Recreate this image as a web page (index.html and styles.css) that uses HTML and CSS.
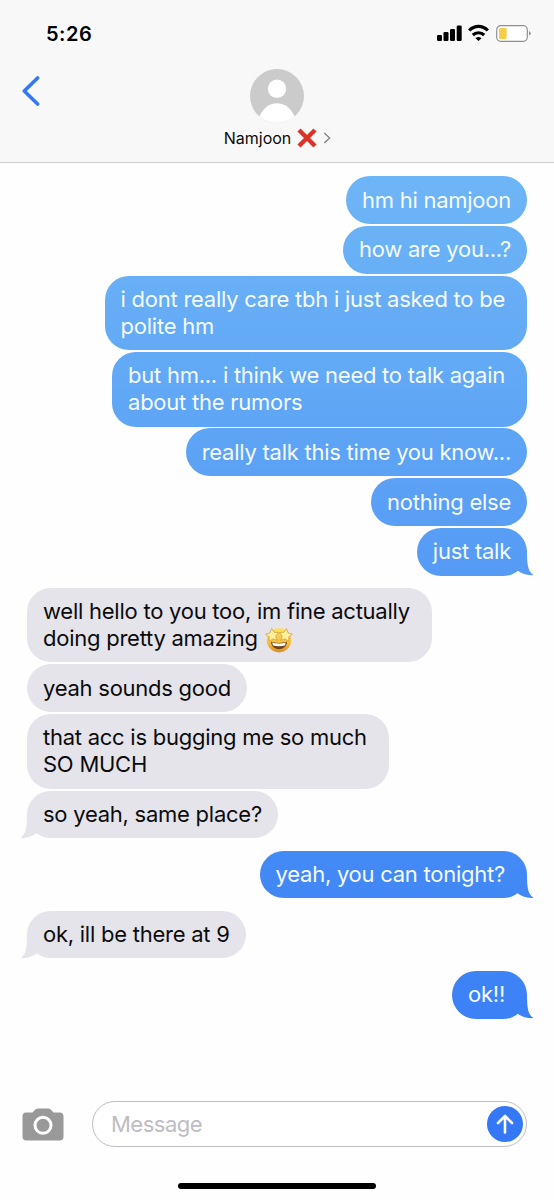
FILE: index.html
```html
<!DOCTYPE html>
<html lang="en">
<head>
    <meta charset="UTF-8">
    <meta name="viewport" content="width=device-width, initial-scale=1.0">
    <title>Messages</title>
    <link rel="stylesheet" href="styles.css">
</head>
<body>
    <header class="header">
        <div class="status-bar">
            <span class="time">5:26</span>
            <svg class="status-icons" width="96" height="20" viewBox="0 0 96 20">
                <rect x="1" y="12" width="5" height="6" rx="1.2"/>
                <rect x="7.5" y="9" width="5" height="9" rx="1.2"/>
                <rect x="14" y="6" width="5" height="12" rx="1.2"/>
                <rect x="20.7" y="2.5" width="5" height="15.5" rx="1.2"/>
                <g fill="none" stroke="#000" stroke-width="3.2">
                    <path d="M33.2 7.5C38.5 2 46.5 2 51.8 7.5"/>
                    <path d="M36.8 12C40 9 45 9 48.2 12"/>
                </g>
                <path d="M42.5 18L39.5 15.2Q42.5 13 45.5 15.2Z"/>
                <rect x="60.7" y="2.7" width="30.6" height="15.6" rx="4" fill="#fff" stroke="#8e8e92" stroke-width="1.2"/>
                <rect x="63" y="5" width="7.6" height="11" rx="1.5" fill="#f7cd46"/>
                <path d="M93 8Q96.4 10.3 93 12.8Z" fill="#8e8e92"/>
            </svg>
        </div>
        <div class="contact-bar">
            <svg class="back" width="18" height="30" viewBox="0 0 18 30">
                <path d="M15.6 2L2.3 15L15.6 28" fill="none" stroke="#3478f6" stroke-width="3.6" stroke-linecap="round" stroke-linejoin="round"/>
            </svg>
            <div class="contact">
                <svg width="54" height="54" viewBox="0 0 54 54">
                    <circle cx="27" cy="27" r="27" fill="#cbcbcb"/>
                    <circle cx="27" cy="19.8" r="9.2" fill="#fff"/>
                    <path d="M9.5 47.5C13 39.5 19 34.3 27 34.3S41 39.5 44.5 47.5A27 27 0 0 1 9.5 47.5Z" fill="#fff"/>
                </svg>
                <div class="name">
                    <span class="name-text">Namjoon</span>
                    <svg class="cross" width="20" height="20" viewBox="0 0 20 20">
                        <path d="M2 2L18 18M18 2L2 18" stroke="#dc3228" stroke-width="4.4"/>
                    </svg>
                    <svg width="8" height="12" viewBox="0 0 8 12">
                        <path d="M1.3 1L6.6 6L1.3 11" fill="none" stroke="#858589" stroke-width="1.4"/>
                    </svg>
                </div>
            </div>
        </div>
    </header>

    <main class="chat">
        <div class="group">
            <p class="bubble sent">hm hi namjoon</p>
            <p class="bubble sent">how are you...?</p>
            <p class="bubble sent wide">i dont really care tbh i just asked to be<br>polite hm</p>
            <p class="bubble sent wide">but hm... i think we need to talk again<br>about the rumors</p>
            <p class="bubble sent">really talk this time you know...</p>
            <p class="bubble sent">nothing else</p>
            <p class="bubble sent tail">just talk</p>
        </div>
        <div class="group">
            <p class="bubble received wide">well hello to you too, im fine actually<br>doing pretty amazing <svg class="emoji" width="28" height="26" viewBox="0 0 28 26">
                <defs>
                    <linearGradient id="face" x1="0" y1="0" x2="0" y2="1">
                        <stop offset="0" stop-color="#fbe26a"/>
                        <stop offset="0.65" stop-color="#f5bd3c"/>
                        <stop offset="1" stop-color="#dd8a25"/>
                    </linearGradient>
                </defs>
                <circle cx="14" cy="13.2" r="12.2" fill="url(#face)"/>
                <path d="M6.6 1.5L9 5.2L13.6 5.6L10.8 9.1L12.2 13.3L7.9 11.9L4.2 14.2L4.2 9.8L.6 7.2L5 5.9Z" fill="#fff0a0" stroke="#d5982e" stroke-width=".7"/>
                <path d="M21.4 1.5L19 5.2L14.4 5.6L17.2 9.1L15.8 13.3L20.1 11.9L23.8 14.2L23.8 9.8L27.4 7.2L23 5.9Z" fill="#fff0a0" stroke="#d5982e" stroke-width=".7"/>
                <path d="M6 14.8Q14 17 22 14.8C21.7 24.6 6.3 24.6 6 14.8Z" fill="#6e4518"/>
                <path d="M7.2 15.6Q14 17.4 20.8 15.6L20 18.5Q14 20 8 18.5Z" fill="#fff"/>
            </svg></p>
            <p class="bubble received">yeah sounds good</p>
            <p class="bubble received wide">that acc is bugging me so much<br>SO MUCH</p>
            <p class="bubble received tail">so yeah, same place?</p>
        </div>
        <div class="group">
            <p class="bubble sent wide tail">yeah, you can tonight?</p>
        </div>
        <div class="group">
            <p class="bubble received tail">ok, ill be there at 9</p>
        </div>
        <div class="group">
            <p class="bubble sent wide tail">ok!!</p>
        </div>
    </main>

    <footer class="footer">
        <div class="compose">
            <svg width="42" height="33" viewBox="0 0 42 33">
                <path d="M4 4.5H10.5L13.3 1.4Q14.5.4 16 .4H26Q27.5.4 28.7 1.4L31.5 4.5H37.5Q41.5 4.5 41.5 8.5V28.5Q41.5 32.5 37.5 32.5H4.5Q.5 32.5 .5 28.5V8.5Q.5 4.5 4 4.5Z" fill="#999"/>
                <circle cx="21" cy="17.3" r="8" fill="#999" stroke="#fff" stroke-width="3"/>
            </svg>
            <div class="input">
                <span class="placeholder">Message</span>
                <svg width="36" height="36" viewBox="0 0 36 36">
                    <circle cx="18" cy="18" r="18" fill="#3478f6"/>
                    <path d="M18 26.5V10.5M11 17L18 10L25 17" fill="none" stroke="#fff" stroke-width="2.6" stroke-linecap="round" stroke-linejoin="round"/>
                </svg>
            </div>
        </div>
        <div class="home-bar"></div>
    </footer>
</body>
</html>
```
FILE: styles.css
```css
* {
    box-sizing: border-box;
}
body {
    margin: 0;
    width: 554px;
    height: 1200px;
    display: flex;
    flex-direction: column;
    background-color: #fefefe;
    color: #0b0b0d;
    font-family: Inter, "Liberation Sans", sans-serif;
    overflow: hidden;
}
svg {
    display: block;
    flex-shrink: 0;
}
.header {
    height: 163px;
    background-color: #f8f8f8;
    border-bottom: 1px solid #cdcdcf;
}
.status-bar {
    display: flex;
    justify-content: space-between;
    height: 69px;
    padding: 23px 22px 0 46px;
}
.time {
    font-size: 20px;
    font-weight: 600;
    line-height: 22px;
    letter-spacing: 0.5px;
    color: #000;
}
.contact-bar {
    display: grid;
    grid-template-columns: 1fr auto 1fr;
}
.back {
    margin: 7px 0 0 22px;
}
.contact {
    display: flex;
    flex-direction: column;
    align-items: center;
}
.name {
    display: flex;
    align-items: center;
    height: 20px;
    margin-top: 5px;
    padding-left: 1px;
    font-size: 16px;
}
.cross {
    margin: 0 6px 0 6px;
}
.chat {
    display: flex;
    flex-direction: column;
    gap: 12.3px;
    padding: 13.2px 27px 0;
    flex: 1;
}
.group {
    display: flex;
    flex-direction: column;
    gap: 1.9px;
}
.bubble {
    position: relative;
    margin: 0;
    padding: 10.4px 16px 10.6px;
    border-radius: 24px;
    font-size: 22px;
    line-height: 26.8px;
    letter-spacing: -0.25px;
    white-space: nowrap;
}
.wide {
    padding-right: 22px;
}
.sent {
    align-self: flex-end;
    color: #f5faff;
}
.sent,
.sent.tail::after {
    background: linear-gradient(#78c0f6 0, #6cb4f6 200px, #569cf5 560px, #4389f5 875px, #3c81f6 1010px) fixed;
}
.received {
    align-self: flex-start;
    background-color: #e5e4ea;
}
.tail::after {
    content: "";
    position: absolute;
    bottom: 0;
    right: -7px;
    width: 29px;
    height: 25px;
    clip-path: path("M8 0H22C22 15 23 21 28.5 24.6C22 25.2 16 23 12.5 20L8 10Z");
}
.received.tail::after {
    right: auto;
    left: -7px;
    background-color: #e5e4ea;
    transform: scaleX(-1);
}
.emoji {
    display: inline-block;
    margin: -3px 0 -3px 1px;
    vertical-align: -4px;
}
.footer {
    height: 99px;
    display: flex;
    flex-direction: column;
    align-items: center;
}
.compose {
    display: flex;
    align-items: center;
    gap: 28px;
    width: 100%;
    padding: 0 27px 0 22px;
}
.input {
    flex: 1;
    display: flex;
    align-items: center;
    justify-content: space-between;
    height: 46px;
    padding: 0 3px 0 18px;
    border: 1px solid #bdbdc3;
    border-radius: 23px;
    background-color: #fff;
}
.placeholder {
    color: #bdbdc2;
    font-size: 22px;
    letter-spacing: -0.5px;
}
.home-bar {
    width: 198px;
    height: 6px;
    margin-top: 36px;
    border-radius: 3px;
    background-color: #000;
}
```
